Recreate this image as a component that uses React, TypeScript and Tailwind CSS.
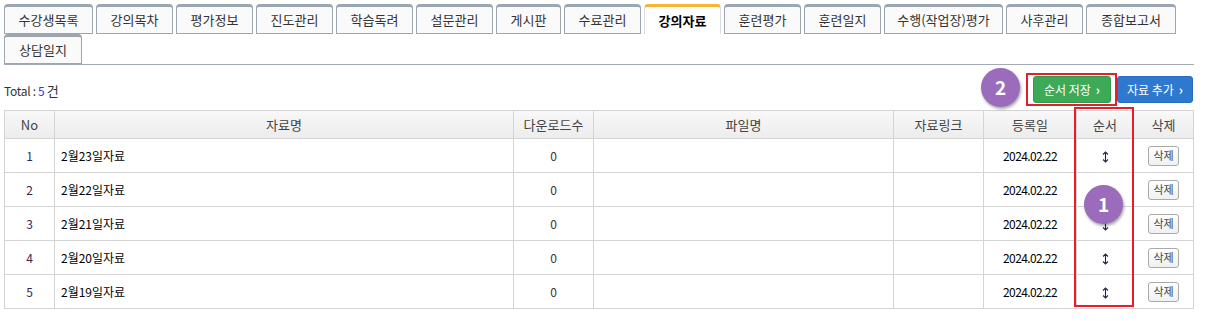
import React from "react";

const tabs = [
  { label: "수강생목록", w: "w-[89px]" },
  { label: "강의목차", w: "w-[77px]" },
  { label: "평가정보", w: "w-[77px]" },
  { label: "진도관리", w: "w-[77px]" },
  { label: "학습독려", w: "w-[77px]" },
  { label: "설문관리", w: "w-[77px]" },
  { label: "게시판", w: "w-[65px]" },
  { label: "수료관리", w: "w-[77px]" },
  { label: "강의자료", w: "w-[77px]" },
  { label: "훈련평가", w: "w-[77px]" },
  { label: "훈련일지", w: "w-[77px]" },
  { label: "수행(작업장)평가", w: "w-[119px]" },
  { label: "사후관리", w: "w-[77px]" },
  { label: "종합보고서", w: "w-[90px]" },
  { label: "상담일지", w: "w-[78px]" },
];

const rows = [
  { no: 1, title: "2월23일자료" },
  { no: 2, title: "2월22일자료" },
  { no: 3, title: "2월21일자료" },
  { no: 4, title: "2월20일자료" },
  { no: 5, title: "2월19일자료" },
];

const SortIcon = () => (
  <svg width="7" height="12" viewBox="0 0 7 12" className="inline-block">
    <path d="M3.5 1 V11 M1 3.5 L3.5 1 L6 3.5 M1 8.5 L3.5 11 L6 8.5" fill="none" stroke="#1f2a44" strokeWidth="1.1" />
  </svg>
);

const Badge = ({ n, className }: { n: number; className: string }) => (
  <div
    className={`absolute w-[39px] h-[39px] rounded-full bg-[#9b6cbc] text-white text-[19px] font-bold flex items-center justify-center shadow-[1px_2px_3px_rgba(0,0,0,0.35)] z-20 ${className}`}
  >
    {n}
  </div>
);

export default function App() {
  return (
    <div className="relative w-[1212px] h-[321px] bg-white pl-[4px] pt-[4px] text-[#333] font-['Noto_Sans_CJK_KR','Noto_Sans',sans-serif]">
      {/* Tabs */}
      <div className="w-[1190px] flex flex-wrap gap-x-[3px] border-b border-[#a2abb5]">
        {tabs.map((t) => {
          const active = t.label === "강의자료";
          return (
            <div
              key={t.label}
              className={`${t.w} h-[30px] flex items-center justify-center rounded-t-[4px] text-[13px] ${
                active
                  ? "border-x border-[#dcdcdc] border-t-[3px] border-t-[#f6b531] bg-white font-bold text-black"
                  : "border border-[#9ba6b1] border-t-[3px] bg-[#fafafa]"
              }`}
            >
              {t.label}
            </div>
          );
        })}
      </div>

      {/* Toolbar */}
      <div className="w-[1189px] h-[45px] flex items-center justify-between">
        <div className="text-[12px] tracking-[-0.3px] pt-[6px]">
          Total : <span className="text-[#3a2fe0]">5</span> <span className="text-[13px]">건</span>
        </div>
        <div className="flex items-center gap-[6px] pt-[4px]">
          <div className="relative">
            <div className="absolute -left-[7px] -right-[6px] -top-[3px] -bottom-[3px] border-2 border-[#e2202c] pointer-events-none" />
            <button className="h-[27px] w-[78px] rounded-[3px] bg-[#3daa58] border border-[#35964d] text-white text-[12px] flex items-center justify-center gap-[5px]">
              순서 저장 <span className="text-[13px] font-bold">›</span>
            </button>
          </div>
          <button className="h-[27px] w-[76px] rounded-[3px] bg-[#2f78cf] border border-[#2a6cbc] text-white text-[12px] flex items-center justify-center gap-[5px]">
            자료 추가 <span className="text-[13px] font-bold">›</span>
          </button>
        </div>
      </div>

      {/* Table */}
      <table className="w-[1189px] border-collapse table-fixed text-[12px]">
        <colgroup>
          <col className="w-[50px]" />
          <col className="w-[459px]" />
          <col className="w-[80px]" />
          <col className="w-[300px]" />
          <col className="w-[90px]" />
          <col className="w-[93px]" />
          <col className="w-[57px]" />
          <col className="w-[60px]" />
        </colgroup>
        <thead>
          <tr className="h-[28px] bg-gradient-to-b from-[#f8f8f8] to-[#ececec] text-[13px] text-[#444]">
            {["No", "자료명", "다운로드수", "파일명", "자료링크", "등록일", "순서", "삭제"].map((h) => (
              <th key={h} className="border border-[#d4d4d4] font-normal text-center">
                {h}
              </th>
            ))}
          </tr>
        </thead>
        <tbody>
          {rows.map((r) => (
            <tr key={r.no} className="h-[34px]">
              <td className="border border-[#d4d4d4] text-center text-[#3b2456]">{r.no}</td>
              <td className="border border-[#d4d4d4] px-[6px] text-black">{r.title}</td>
              <td className="border border-[#d4d4d4] text-center">0</td>
              <td className="border border-[#d4d4d4]"></td>
              <td className="border border-[#d4d4d4]"></td>
              <td className="border border-[#d4d4d4] text-center text-black tracking-[-0.6px]">2024.02.22</td>
              <td className="border border-[#d4d4d4] text-center">
                <SortIcon />
              </td>
              <td className="border border-[#d4d4d4] text-center">
                <button className="h-[20px] px-[4px] rounded-[3px] border border-[#aaa] bg-gradient-to-b from-white to-[#f0f0f0] text-[11px] text-[#444] leading-none">
                  삭제
                </button>
              </td>
            </tr>
          ))}
        </tbody>
      </table>

      {/* Annotation overlays */}
      <div className="absolute left-[1074px] top-[107px] w-[60px] h-[200px] border-2 border-[#e2202c] pointer-events-none z-10" />
      <Badge n={2} className="left-[981px] top-[68px]" />
      <Badge n={1} className="left-[1084px] top-[185px]" />
    </div>
  );
}
